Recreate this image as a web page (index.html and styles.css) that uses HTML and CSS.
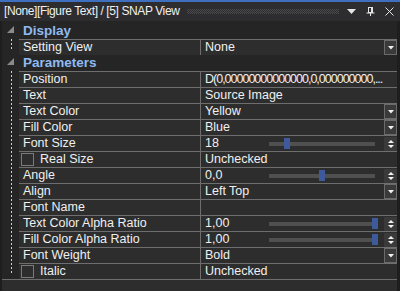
FILE: index.html
```html
<!DOCTYPE html>
<html>
<head>
<meta charset="utf-8">
<link rel="stylesheet" href="styles.css">
</head>
<body>
<div class="panel">
  <div class="accent"></div>
  <div class="titlebar">
    <span class="title">[None][Figure Text] / [5] SNAP View</span>
    <span class="grip"></span>
    <span class="tb-icons">
      <svg class="tb-ico" width="9" height="6" viewBox="0 0 9 6"><polygon points="0,0 9,0 4.5,5" fill="#e6e6e6"/></svg>
      <svg class="tb-ico" width="9" height="9" viewBox="0 0 9 9"><rect x="2.5" y="0.5" width="4" height="5" fill="none" stroke="#e6e6e6"/><line x1="0.5" y1="6" x2="8.5" y2="6" stroke="#e6e6e6"/><line x1="4.5" y1="6" x2="4.5" y2="9" stroke="#e6e6e6"/><line x1="5.5" y1="1" x2="5.5" y2="5" stroke="#e6e6e6"/></svg>
      <svg class="tb-ico" width="9" height="9" viewBox="0 0 9 9"><path d="M0.5 0.5 L8.5 8.5 M8.5 0.5 L0.5 8.5" stroke="#e6e6e6" stroke-width="1"/></svg>
    </span>
  </div>

  <div class="grid">
    <div class="cat">
      <span class="gutter"><svg class="exp" width="7" height="7" viewBox="0 0 7 7"><polygon points="7,0 7,7 0,7" fill="#8a8a8a"/></svg></span>
      <span class="cat-name">Display</span>
    </div>
    <div class="group">
      <div class="row">
        <div class="name">Setting View</div>
        <div class="value"><span class="text">None</span><span class="drop"><svg width="6" height="4" viewBox="0 0 6 4"><polygon points="0,0 6,0 3,3.5" fill="#f0f0f0"/></svg></span></div>
      </div>
    </div>

    <div class="cat">
      <span class="gutter"><svg class="exp" width="7" height="7" viewBox="0 0 7 7"><polygon points="7,0 7,7 0,7" fill="#8a8a8a"/></svg></span>
      <span class="cat-name">Parameters</span>
    </div>
    <div class="group">
      <div class="row">
        <div class="name">Position</div>
        <div class="value"><span class="text tight">D(0,00000000000000,0,000000000,...</span></div>
      </div>
      <div class="row">
        <div class="name">Text</div>
        <div class="value"><span class="text">Source Image</span></div>
      </div>
      <div class="row">
        <div class="name">Text Color</div>
        <div class="value"><span class="text">Yellow</span><span class="drop"><svg width="6" height="4" viewBox="0 0 6 4"><polygon points="0,0 6,0 3,3.5" fill="#f0f0f0"/></svg></span></div>
      </div>
      <div class="row">
        <div class="name">Fill Color</div>
        <div class="value"><span class="text">Blue</span><span class="drop"><svg width="6" height="4" viewBox="0 0 6 4"><polygon points="0,0 6,0 3,3.5" fill="#f0f0f0"/></svg></span></div>
      </div>
      <div class="row">
        <div class="name">Font Size</div>
        <div class="value"><span class="num">18</span><span class="track"><span class="thumb" style="left:15px"></span></span><span class="spin"><svg width="6" height="8" viewBox="0 0 6 8"><polygon points="3,0 6,3 0,3" fill="#f0f0f0"/><polygon points="0,5 6,5 3,8" fill="#f0f0f0"/></svg></span></div>
      </div>
      <div class="row">
        <div class="name check"><span class="box"></span>Real Size</div>
        <div class="value"><span class="text">Unchecked</span></div>
      </div>
      <div class="row">
        <div class="name">Angle</div>
        <div class="value"><span class="num">0,0</span><span class="track"><span class="thumb" style="left:50px"></span></span><span class="spin"><svg width="6" height="8" viewBox="0 0 6 8"><polygon points="3,0 6,3 0,3" fill="#f0f0f0"/><polygon points="0,5 6,5 3,8" fill="#f0f0f0"/></svg></span></div>
      </div>
      <div class="row">
        <div class="name">Align</div>
        <div class="value"><span class="text">Left Top</span><span class="drop"><svg width="6" height="4" viewBox="0 0 6 4"><polygon points="0,0 6,0 3,3.5" fill="#f0f0f0"/></svg></span></div>
      </div>
      <div class="row">
        <div class="name">Font Name</div>
        <div class="value"><span class="text"></span></div>
      </div>
      <div class="row">
        <div class="name">Text Color Alpha Ratio</div>
        <div class="value"><span class="num">1,00</span><span class="track"><span class="thumb" style="left:103px"></span></span><span class="spin"><svg width="6" height="8" viewBox="0 0 6 8"><polygon points="3,0 6,3 0,3" fill="#f0f0f0"/><polygon points="0,5 6,5 3,8" fill="#f0f0f0"/></svg></span></div>
      </div>
      <div class="row">
        <div class="name">Fill Color Alpha Ratio</div>
        <div class="value"><span class="num">1,00</span><span class="track"><span class="thumb" style="left:103px"></span></span><span class="spin"><svg width="6" height="8" viewBox="0 0 6 8"><polygon points="3,0 6,3 0,3" fill="#f0f0f0"/><polygon points="0,5 6,5 3,8" fill="#f0f0f0"/></svg></span></div>
      </div>
      <div class="row">
        <div class="name">Font Weight</div>
        <div class="value"><span class="text">Bold</span><span class="drop"><svg width="6" height="4" viewBox="0 0 6 4"><polygon points="0,0 6,0 3,3.5" fill="#f0f0f0"/></svg></span></div>
      </div>
      <div class="row">
        <div class="name check"><span class="box"></span>Italic</div>
        <div class="value"><span class="text">Unchecked</span></div>
      </div>
    </div>
  </div>
  <div class="footer"></div>
</div>
</body>
</html>
```

FILE: styles.css
```css
html, body {
  margin: 0;
  padding: 0;
  background: #1e1e1e;
}

.panel {
  width: 400px;
  height: 291px;
  background: #1e1e1e;
  font-family: "Liberation Sans", Arial, sans-serif;
  color: #f0f0f0;
  overflow: hidden;
  display: flex;
  flex-direction: column;
}

.accent {
  height: 2px;
  background: #3f6fbf;
}

.titlebar {
  height: 19px;
  background: #2d2d30;
  display: flex;
  align-items: center;
}

.title {
  font-size: 12px;
  letter-spacing: -0.4px;
  line-height: 19px;
  padding-left: 4px;
  white-space: nowrap;
  color: #f0f0f0;
}

.grip {
  flex: 1;
  height: 5px;
  margin: 0 8px 0 8px;
  background-image: conic-gradient(#4a4a4e 25%, transparent 0 50%, #4a4a4e 0 75%, transparent 0);
  background-size: 2px 2px;
}

.tb-icons {
  display: flex;
  align-items: center;
  gap: 10px;
  padding-right: 6px;
}

.tb-ico {
  display: block;
}

.grid {
  margin: 0 3px 0 2px;
  padding-top: 2px;
  background: #252526;
}

.cat {
  height: 16px;
  display: flex;
  align-items: center;
  background: #252526;
}

.gutter {
  width: 17px;
  height: 16px;
  display: flex;
  align-items: flex-start;
}

.exp {
  display: block;
  margin: 3px 0 0 5px;
}

.cat-name {
  font-size: 13.5px;
  font-weight: bold;
  line-height: 16px;
  padding-left: 4px;
  color: #8fbaf0;
}

.group {
  padding-left: 17px;
  background-color: #252526;
  background-image: repeating-linear-gradient(to bottom, #d0d0d0 0 2px, transparent 2px 4px);
  background-size: 1px calc(100% - 6px);
  background-position: 9px 0;
  background-repeat: no-repeat;
}

.row {
  display: grid;
  grid-template-columns: 181px 1fr;
  border-top: 1px solid #6e6e6e;
  background: #2d2d2d;
  height: 15px;
}

.name {
  font-size: 12.5px;
  line-height: 15px;
  padding-left: 4px;
  white-space: nowrap;
  overflow: hidden;
}

.name.check {
  padding-left: 2px;
  display: flex;
  align-items: center;
}

.box {
  width: 11px;
  height: 11px;
  border: 1px solid #7a7a7a;
  margin-right: 6px;
  flex: none;
}

.value {
  border-left: 1px solid #6e6e6e;
  display: flex;
  align-items: center;
  padding-left: 4px;
  font-size: 12.5px;
  line-height: 15px;
  min-width: 0;
}

.text {
  flex: 1;
  white-space: nowrap;
  overflow: hidden;
}

.tight {
  letter-spacing: -1px;
}

.drop {
  width: 11px;
  height: 13px;
  border: 1px solid #6a6a6a;
  background: #3a3a3a;
  display: flex;
  align-items: center;
  justify-content: center;
  flex: none;
}

.drop svg, .spin svg {
  display: block;
}

.num {
  width: 64px;
  flex: none;
  white-space: nowrap;
}

.track {
  width: 106px;
  height: 4px;
  background: #505050;
  position: relative;
  flex: none;
}

.thumb {
  position: absolute;
  top: -4px;
  width: 6px;
  height: 11px;
  background: #3c5a9c;
}

.spin {
  margin-left: 9px;
  width: 13px;
  height: 14px;
  background: #3a3a3a;
  display: flex;
  align-items: center;
  justify-content: center;
  flex: none;
}

.footer {
  flex: 1;
  margin: 0 3px 0 2px;
  border-top: 1px solid #6e6e6e;
  background: #2d2d2d;
}
```
